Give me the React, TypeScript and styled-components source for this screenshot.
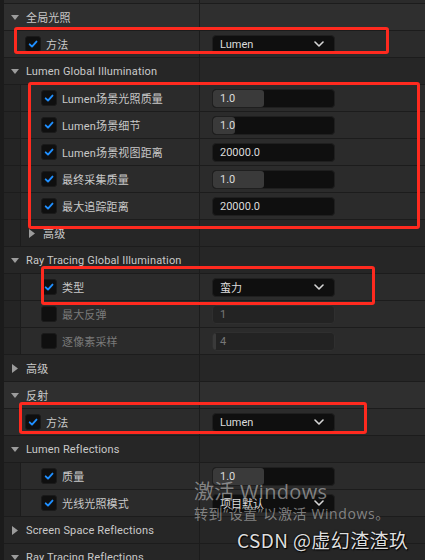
import React from 'react';
import styled, { createGlobalStyle } from 'styled-components';

const Global = createGlobalStyle`
  html, body { margin: 0; padding: 0; background: #1b1b1b; }
  body {
    width: 425px; height: 560px; overflow: hidden;
    font-family: Roboto, "Noto Sans CJK SC", sans-serif;
  }
`;

const Page = styled.div`
  position: relative;
  width: 425px;
  height: 560px;
  overflow: hidden;
  background: #1b1b1b;
  padding-left: 4px;
  box-sizing: border-box;
`;

const List = styled.div`
  display: flex;
  flex-direction: column;
  margin-top: -23px;
`;

type Tone = 'category' | 'group' | 'prop';

const Row = styled.div<{ $tone: Tone }>`
  display: grid;
  grid-template-columns: 196px 1fr;
  height: 26px;
  border-bottom: 1px solid #1c1c1c;
  background: ${(p) => (p.$tone === 'category' ? '#2f2f2f' : p.$tone === 'group' ? '#262626' : '#2b2b2b')};
`;

const NameCell = styled.div`
  display: flex;
  align-items: stretch;
  border-right: 1px solid #1c1c1c;
  min-width: 0;
`;

const Indent = styled.div`
  flex: none;
  width: 16px;
  background: #242424;
  border-right: 1px solid #1c1c1c;
`;

const NameInner = styled.div<{ $pad: number; $gap: number }>`
  display: flex;
  align-items: center;
  padding-left: ${(p) => p.$pad}px;
  gap: ${(p) => p.$gap}px;
  min-width: 0;
`;

const Label = styled.span<{ $muted?: boolean }>`
  font-size: 11px;
  color: ${(p) => (p.$muted ? '#7a7a7a' : '#c9c9c9')};
  white-space: nowrap;
  letter-spacing: 0.15px;
`;

const ArrowBox = styled.span`
  width: 11px;
  display: flex;
  align-items: center;
  justify-content: center;
`;

const Check = styled.span`
  flex: none;
  width: 16px;
  height: 16px;
  box-sizing: border-box;
  border-radius: 3px;
  background: #0f0f0f;
  border: 1px solid #1a1a1a;
  display: flex;
  align-items: center;
  justify-content: center;
`;

const ValueCell = styled.div`
  display: flex;
  align-items: center;
  padding-left: 12px;
`;

const Field = styled.div<{ $disabled?: boolean }>`
  position: relative;
  width: 123px;
  height: 19px;
  box-sizing: border-box;
  border-radius: 4px;
  background: ${(p) => (p.$disabled ? '#232323' : '#0f0f0f')};
  border: 1px solid ${(p) => (p.$disabled ? '#2f2f2f' : '#1f1f1f')};
  display: flex;
  align-items: center;
  justify-content: space-between;
  padding: 0 10px 0 7px;
  overflow: hidden;
`;

const Fill = styled.div`
  position: absolute;
  left: 0;
  top: 0;
  bottom: 0;
  background: #3a3a3a;
  border-radius: 3px;
`;

const FieldText = styled.span<{ $muted?: boolean }>`
  position: relative;
  font-size: 11px;
  color: ${(p) => (p.$muted ? '#777777' : '#dcdcdc')};
  white-space: nowrap;
`;

const Annot = styled.div`
  position: absolute;
  border: 3px solid #ff2a1f;
  border-radius: 3px;
  box-sizing: border-box;
  pointer-events: none;
`;

const Watermark = styled.div`
  position: absolute;
  left: 194px;
  top: 479px;
  color: rgba(190, 190, 190, 0.62);
  font-family: "Open Sans", "Noto Sans CJK SC", sans-serif;
  pointer-events: none;
`;

const WmBig = styled.div`
  font-size: 20px;
  line-height: 26px;
  letter-spacing: 0.3px;
`;

const WmSmall = styled.div`
  font-size: 14px;
  line-height: 18px;
  letter-spacing: 0.6px;
`;

const Csdn = styled.div`
  position: absolute;
  left: 237px;
  top: 527px;
  font-size: 19px;
  line-height: 26px;
  letter-spacing: 0.4px;
  color: #dedede;
  font-family: "Noto Sans CJK SC", "Liberation Sans", sans-serif;
  text-shadow: 0 0 2px #000, 1px 1px 1px #000;
  pointer-events: none;
`;

const DownArrow = () => (
  <svg width="8" height="5" viewBox="0 0 8 5"><polygon points="0,0 8,0 4,5" fill="#9c9c9c" /></svg>
);
const RightArrow = () => (
  <svg width="6" height="9" viewBox="0 0 6 9"><polygon points="0,0 6,4.5 0,9" fill="#9c9c9c" /></svg>
);
const CheckMark = () => (
  <svg width="12" height="12" viewBox="0 0 12 12">
    <path d="M2.7 6.3 L5 8.6 L9.5 3.6" stroke="#1f8fff" strokeWidth="1.9" fill="none" strokeLinecap="round" strokeLinejoin="round" />
  </svg>
);
const Chevron = () => (
  <svg width="10" height="6" viewBox="0 0 10 6">
    <path d="M1 1 L5 5 L9 1" stroke="#d6d6d6" strokeWidth="1.6" fill="none" strokeLinecap="round" strokeLinejoin="round" />
  </svg>
);

type Value =
  | { type: 'num'; text: string; fill?: number }
  | { type: 'select'; text: string };

type Item =
  | { kind: 'header'; tone: Tone; depth: number; open: boolean; label: string }
  | { kind: 'prop'; depth: number; label: string; checked?: boolean; disabled?: boolean; noCheck?: boolean; value: Value };

const items: Item[] = [
  { kind: 'prop', depth: 0, label: '', noCheck: true, value: { type: 'num', text: '' } },
  { kind: 'header', tone: 'category', depth: 0, open: true, label: '全局光照' },
  { kind: 'prop', depth: 0, label: '方法', checked: true, value: { type: 'select', text: 'Lumen' } },
  { kind: 'header', tone: 'group', depth: 0, open: true, label: 'Lumen Global Illumination' },
  { kind: 'prop', depth: 1, label: 'Lumen场景光照质量', checked: true, value: { type: 'num', text: '1.0', fill: 51 } },
  { kind: 'prop', depth: 1, label: 'Lumen场景细节', checked: true, value: { type: 'num', text: '1.0', fill: 22 } },
  { kind: 'prop', depth: 1, label: 'Lumen场景视图距离', checked: true, value: { type: 'num', text: '20000.0' } },
  { kind: 'prop', depth: 1, label: '最终采集质量', checked: true, value: { type: 'num', text: '1.0', fill: 51 } },
  { kind: 'prop', depth: 1, label: '最大追踪距离', checked: true, value: { type: 'num', text: '20000.0' } },
  { kind: 'header', tone: 'group', depth: 1, open: false, label: '高级' },
  { kind: 'header', tone: 'group', depth: 0, open: true, label: 'Ray Tracing Global Illumination' },
  { kind: 'prop', depth: 1, label: '类型', checked: true, value: { type: 'select', text: '蛮力' } },
  { kind: 'prop', depth: 1, label: '最大反弹', disabled: true, value: { type: 'num', text: '1' } },
  { kind: 'prop', depth: 1, label: '逐像素采样', disabled: true, value: { type: 'num', text: '4', fill: 3 } },
  { kind: 'header', tone: 'group', depth: 0, open: false, label: '高级' },
  { kind: 'header', tone: 'category', depth: 0, open: true, label: '反射' },
  { kind: 'prop', depth: 0, label: '方法', checked: true, value: { type: 'select', text: 'Lumen' } },
  { kind: 'header', tone: 'group', depth: 0, open: true, label: 'Lumen Reflections' },
  { kind: 'prop', depth: 1, label: '质量', checked: true, value: { type: 'num', text: '1.0', fill: 51 } },
  { kind: 'prop', depth: 1, label: '光线光照模式', checked: true, value: { type: 'select', text: '项目默认' } },
  { kind: 'header', tone: 'group', depth: 0, open: false, label: 'Screen Space Reflections' },
  { kind: 'header', tone: 'group', depth: 0, open: true, label: 'Ray Tracing Reflections' },
];

const ValueView: React.FC<{ v: Value; disabled?: boolean }> = ({ v, disabled }) => {
  if (v.type === 'select') {
    return (
      <Field>
        <FieldText>{v.text}</FieldText>
        <Chevron />
      </Field>
    );
  }
  return (
    <Field $disabled={disabled}>
      {v.fill ? <Fill style={{ width: v.fill }} /> : null}
      <FieldText $muted={disabled}>{v.text}</FieldText>
    </Field>
  );
};

const RowView: React.FC<{ item: Item }> = ({ item }) => {
  if (item.kind === 'header') {
    return (
      <Row $tone={item.tone}>
        <NameCell>
          {item.depth > 0 && <Indent />}
          <NameInner $pad={5} $gap={6}>
            <ArrowBox>{item.open ? <DownArrow /> : <RightArrow />}</ArrowBox>
            <Label>{item.label}</Label>
          </NameInner>
        </NameCell>
        <ValueCell />
      </Row>
    );
  }
  return (
    <Row $tone="prop">
      <NameCell>
        {item.depth > 0 && <Indent />}
        <NameInner $pad={item.depth > 0 ? 20 : 21} $gap={5}>
          {!item.noCheck && <Check>{item.checked ? <CheckMark /> : null}</Check>}
          <Label $muted={item.disabled}>{item.label}</Label>
        </NameInner>
      </NameCell>
      <ValueCell>
        <ValueView v={item.value} disabled={item.disabled} />
      </ValueCell>
    </Row>
  );
};

export default function App() {
  return (
    <Page>
      <Global />
      <List>
        {items.map((it, i) => (
          <RowView key={i} item={it} />
        ))}
      </List>
      <Annot style={{ left: 14, top: 27, width: 375, height: 27 }} />
      <Annot style={{ left: 28, top: 82, width: 392, height: 147 }} />
      <Annot style={{ left: 41, top: 266, width: 334, height: 39 }} />
      <Annot style={{ left: 19, top: 402, width: 348, height: 32 }} />
      <Watermark>
        <WmBig>激活 Windows</WmBig>
        <WmSmall>转到“设置”以激活 Windows。</WmSmall>
      </Watermark>
      <Csdn>CSDN @虚幻渣渣玖</Csdn>
    </Page>
  );
}
